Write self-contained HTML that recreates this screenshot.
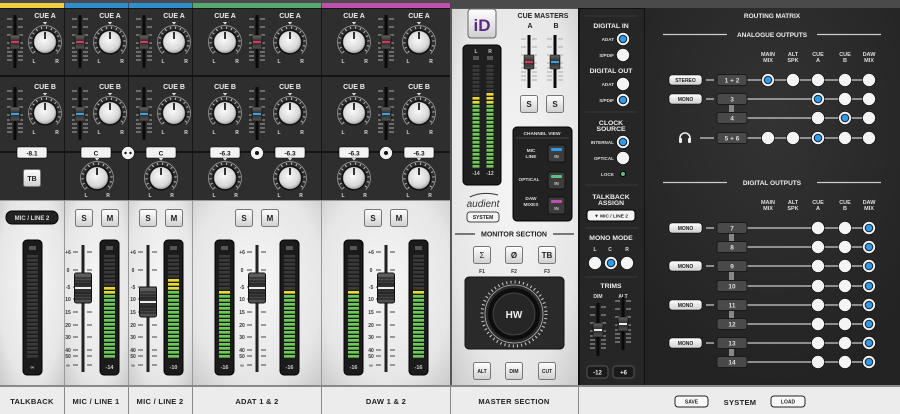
<!DOCTYPE html>
<html><head><meta charset="utf-8"><style>
html,body{margin:0;padding:0;background:#1e1e1e;width:900px;height:414px;overflow:hidden}
svg{display:block;font-family:"Liberation Sans",sans-serif;font-weight:bold}
</style></head><body>
<svg width="900" height="414" viewBox="0 0 900 414" xmlns="http://www.w3.org/2000/svg">
<defs>
<radialGradient id="kg" cx="45%" cy="40%" r="65%"><stop offset="0" stop-color="#fafafa"/><stop offset=".7" stop-color="#d8d8d8"/><stop offset="1" stop-color="#9a9a9a"/></radialGradient>
<linearGradient id="cg" x1="0" y1="0" x2="0" y2="1"><stop offset="0" stop-color="#666"/><stop offset=".5" stop-color="#2a2a2a"/><stop offset="1" stop-color="#555"/></linearGradient>
<radialGradient id="lg" cx="50%" cy="45%" r="75%"><stop offset="0" stop-color="#f6f6f6"/><stop offset=".7" stop-color="#e6e6e6"/><stop offset="1" stop-color="#c9c9c9"/></radialGradient>
<linearGradient id="bg" x1="0" y1="0" x2="0" y2="1"><stop offset="0" stop-color="#fff"/><stop offset="1" stop-color="#cfcfcf"/></linearGradient>
<radialGradient id="rg" cx="50%" cy="30%" r="70%"><stop offset="0" stop-color="#333"/><stop offset="1" stop-color="#232323"/></radialGradient>
<g id="knob">
<path d="M-10.3,10.3A14.5,14.5 0 1 1 10.3,10.3" fill="none" stroke="#bbb" stroke-width="2.4" stroke-dasharray="1 4"/>
<path d="M-11.7,11.7A16.5,16.5 0 1 1 11.7,11.7" fill="none" stroke="#999" stroke-width=".8"/>
<circle r="12.5" fill="#0c0c0c"/>
<circle r="11" fill="url(#kg)" stroke="#777" stroke-width=".5"/>
<line y1="-10" y2="-3" stroke="#111" stroke-width="1.7"/>
<path d="M-2.2,-20h4.4l-2.2,2.6z" fill="#ddd"/>
</g>
<g id="sf">
<rect x="-1.5" y="0" width="3" height="53" fill="#0a0a0a"/>
<path d="M-8,4h5M3,4h5M-8,12h5M3,12h5M-8,20h5M3,20h5M-8,28h5M3,28h5M-8,33h5M3,33h5M-8,37h5M3,37h5M-8,41h5M3,41h5M-8,45h5M3,45h5" stroke="#aaa" stroke-width="1"/>
<rect x="-5" y="20" width="10" height="14" rx="1" fill="url(#cg)" stroke="#000" stroke-width=".5"/>
</g>
<g id="sfA"><use href="#sf"/><rect x="-4" y="26" width="8" height="2" fill="#e0325a"/></g>
<g id="sfB"><use href="#sf"/><rect x="-4" y="26" width="8" height="2" fill="#3aa0e0"/></g>
<g id="sfW"><use href="#sf"/><rect x="-4" y="26" width="8" height="2" fill="#eee"/></g>
<g id="bc">
<rect x="-8.5" y="-15" width="17" height="30" rx="2" fill="url(#cg)" stroke="#111"/>
<path d="M-8,-10h16M-8,-7h16M-8,-4h16M-8,5h16M-8,8h16M-8,11h16" stroke="#111" stroke-width=".8"/>
<rect x="-8" y="-1" width="16" height="2" fill="#eee"/>
</g>
<g id="mt">
<rect width="19" height="135" rx="4" fill="#1b1b1b" stroke="#000"/>
<rect x="6" y="6" width="7" height="4" fill="#555"/>
<line x1="9.5" y1="15" x2="9.5" y2="119" stroke="#3a3a3a" stroke-width="11" stroke-dasharray="2.6 1.4"/>
</g>
<g id="scale" font-size="5" fill="#333" text-anchor="middle">
<text x="-15" y="9">+6</text><text x="-15" y="27">0</text><text x="-15" y="44">-5</text><text x="-15" y="56">10</text><text x="-15" y="69">15</text><text x="-15" y="82">20</text><text x="-15" y="94">30</text><text x="-15" y="107">40</text><text x="-15" y="113">50</text><text x="-15" y="122">∞</text>
<path d="M-10,7h5M4,7h5M-10,25h5M4,25h5M-10,42h5M4,42h5M-10,54h5M4,54h5M-10,67h5M4,67h5M-10,80h5M4,80h5M-10,92h5M4,92h5M-10,105h5M4,105h5M-10,111h5M4,111h5M-10,120h5M4,120h5" stroke="#444" stroke-width="1"/>
<rect x="-1.5" y="0" width="3" height="127" fill="#222"/>
</g>
<g id="r"><circle r="6.5" fill="#f4f4f4" stroke="#000" stroke-width=".6"/></g>
<g id="rs"><circle r="6.5" fill="#f4f4f4" stroke="#000" stroke-width=".6"/><circle r="4.3" fill="#1a2a3a"/><circle r="3.2" fill="#2f9be6"/></g>
<g id="btn"><rect x="-8.5" y="-8.5" width="17" height="17" rx="2" fill="url(#bg)" stroke="#777"/></g>
</defs>

<rect width="900" height="9" fill="#4a4a4a"/>
<rect x="0" y="3" width="64" height="5" fill="#f0d040"/>
<rect x="65" y="3" width="63" height="5" fill="#2d8fd0"/>
<rect x="129" y="3" width="63" height="5" fill="#2d8fd0"/>
<rect x="193" y="3" width="128" height="5" fill="#5aa870"/>
<rect x="322" y="3" width="128" height="5" fill="#c050b0"/>

<rect x="0" y="8" width="451" height="193" fill="#141414"/>
<g fill="#2e2e2e">
<rect x="0" y="9" width="64" height="66"/><rect x="65" y="9" width="63" height="66"/><rect x="129" y="9" width="63" height="66"/><rect x="193" y="9" width="128" height="66"/><rect x="322" y="9" width="128" height="66"/>
<rect x="0" y="77" width="64" height="74"/><rect x="65" y="77" width="63" height="74"/><rect x="129" y="77" width="63" height="74"/><rect x="193" y="77" width="128" height="74"/><rect x="322" y="77" width="128" height="74"/>
<rect x="0" y="153" width="64" height="47"/><rect x="65" y="153" width="63" height="47"/><rect x="129" y="153" width="63" height="47"/><rect x="193" y="153" width="128" height="47"/><rect x="322" y="153" width="128" height="47"/>
</g>

<use href="#sfA" x="15" y="15"/><use href="#sfA" x="80" y="15"/><use href="#sfA" x="144" y="15"/><use href="#sfA" x="257" y="15"/><use href="#sfA" x="386" y="15"/>
<use href="#sfB" x="15" y="87"/><use href="#sfB" x="80" y="87"/><use href="#sfB" x="144" y="87"/><use href="#sfB" x="257" y="87"/><use href="#sfB" x="386" y="87"/>
<g>
<use href="#knob" x="45" y="42"/><use href="#knob" x="110" y="42"/><use href="#knob" x="174" y="42"/><use href="#knob" x="225" y="42"/><use href="#knob" x="290" y="42"/><use href="#knob" x="354" y="42"/><use href="#knob" x="419" y="42"/>
<use href="#knob" x="45" y="113"/><use href="#knob" x="110" y="113"/><use href="#knob" x="174" y="113"/><use href="#knob" x="225" y="113"/><use href="#knob" x="290" y="113"/><use href="#knob" x="354" y="113"/><use href="#knob" x="419" y="113"/>
</g>
<g fill="#eee" font-size="7" text-anchor="middle">
<text x="45" y="18">CUE A</text><text x="110" y="18">CUE A</text><text x="174" y="18">CUE A</text><text x="225" y="18">CUE A</text><text x="290" y="18">CUE A</text><text x="354" y="18">CUE A</text><text x="419" y="18">CUE A</text>
<text x="45" y="89">CUE B</text><text x="110" y="89">CUE B</text><text x="174" y="89">CUE B</text><text x="225" y="89">CUE B</text><text x="290" y="89">CUE B</text><text x="354" y="89">CUE B</text><text x="419" y="89">CUE B</text>
</g>
<g fill="#ddd" font-size="5" text-anchor="middle">
<text x="34" y="63">L</text><text x="57" y="63">R</text><text x="99" y="63">L</text><text x="122" y="63">R</text><text x="163" y="63">L</text><text x="186" y="63">R</text><text x="214" y="63">L</text><text x="237" y="63">R</text><text x="279" y="63">L</text><text x="302" y="63">R</text><text x="343" y="63">L</text><text x="366" y="63">R</text><text x="408" y="63">L</text><text x="431" y="63">R</text>
<text x="34" y="134">L</text><text x="57" y="134">R</text><text x="99" y="134">L</text><text x="122" y="134">R</text><text x="163" y="134">L</text><text x="186" y="134">R</text><text x="214" y="134">L</text><text x="237" y="134">R</text><text x="279" y="134">L</text><text x="302" y="134">R</text><text x="343" y="134">L</text><text x="366" y="134">R</text><text x="408" y="134">L</text><text x="431" y="134">R</text>
<text x="86" y="197">L</text><text x="108" y="197">R</text><text x="150" y="197">L</text><text x="172" y="197">R</text><text x="214" y="197">L</text><text x="236" y="197">R</text><text x="279" y="197">L</text><text x="301" y="197">R</text><text x="343" y="197">L</text><text x="365" y="197">R</text><text x="408" y="197">L</text><text x="430" y="197">R</text>
</g>
<g fill="#f2f2f2" stroke="#000" stroke-width=".6">
<rect x="17" y="147" width="30" height="11" rx="2"/><rect x="81" y="147" width="30" height="11" rx="2"/><rect x="146" y="147" width="30" height="11" rx="2"/>
<rect x="210" y="147" width="30" height="11" rx="2"/><rect x="275" y="147" width="30" height="11" rx="2"/><rect x="339" y="147" width="30" height="11" rx="2"/><rect x="404" y="147" width="30" height="11" rx="2"/>
<circle cx="128" cy="153" r="6.5"/><circle cx="257" cy="153" r="6.5"/><circle cx="386" cy="153" r="6.5"/>
</g>
<g fill="#111"><circle cx="125.5" cy="153" r="1.2"/><circle cx="130.5" cy="153" r="1.2"/><circle cx="257" cy="153" r="2"/><circle cx="386" cy="153" r="2"/></g>
<g fill="#111" font-size="6.5" text-anchor="middle">
<text x="32" y="155.5">-8.1</text><text x="96" y="155.5">C</text><text x="161" y="155.5">C</text><text x="225" y="155.5">-6.3</text><text x="290" y="155.5">-6.3</text><text x="354" y="155.5">-6.3</text><text x="419" y="155.5">-6.3</text>
</g>
<use href="#knob" x="97" y="178"/><use href="#knob" x="161" y="178"/><use href="#knob" x="225" y="178"/><use href="#knob" x="290" y="178"/><use href="#knob" x="354" y="178"/><use href="#knob" x="419" y="178"/>
<use href="#btn" x="32" y="178"/><text x="32" y="181" font-size="7" text-anchor="middle" fill="#222">TB</text>

<rect x="0" y="200" width="451" height="186" fill="#999"/>
<g fill="url(#lg)">
<rect x="0" y="201" width="64" height="185"/><rect x="65" y="201" width="63" height="185"/><rect x="129" y="201" width="63" height="185"/><rect x="193" y="201" width="128" height="185"/><rect x="322" y="201" width="128" height="185"/>
</g>
<rect x="6" y="211" width="52" height="13" rx="6" fill="#222" stroke="#000"/>
<text x="32" y="220" font-size="6" fill="#ddd" text-anchor="middle">MIC / LINE 2</text>
<use href="#btn" x="84" y="218"/><use href="#btn" x="110" y="218"/><use href="#btn" x="148" y="218"/><use href="#btn" x="174" y="218"/><use href="#btn" x="244" y="218"/><use href="#btn" x="270" y="218"/><use href="#btn" x="373" y="218"/><use href="#btn" x="399" y="218"/>
<g font-size="8" fill="#222" text-anchor="middle">
<text x="84" y="221">S</text><text x="110" y="221">M</text><text x="148" y="221">S</text><text x="174" y="221">M</text><text x="244" y="221">S</text><text x="270" y="221">M</text><text x="373" y="221">S</text><text x="399" y="221">M</text>
</g>
<use href="#mt" x="23" y="240"/><use href="#mt" x="100" y="240"/><use href="#mt" x="164" y="240"/><use href="#mt" x="215" y="240"/><use href="#mt" x="280" y="240"/><use href="#mt" x="344" y="240"/><use href="#mt" x="409" y="240"/>
<g stroke-width="11" stroke-dasharray="2.6 1.4">
<line x1="109.5" y1="287" x2="109.5" y2="295" stroke="#e8d83a"/><line x1="109.5" y1="295" x2="109.5" y2="359" stroke="#6dc857"/>
<line x1="173.5" y1="279" x2="173.5" y2="291" stroke="#e8d83a"/><line x1="173.5" y1="291" x2="173.5" y2="359" stroke="#6dc857"/>
<line x1="224.5" y1="291" x2="224.5" y2="295" stroke="#e8d83a"/><line x1="224.5" y1="295" x2="224.5" y2="359" stroke="#6dc857"/>
<line x1="289.5" y1="291" x2="289.5" y2="295" stroke="#e8d83a"/><line x1="289.5" y1="295" x2="289.5" y2="359" stroke="#6dc857"/>
<line x1="353.5" y1="291" x2="353.5" y2="295" stroke="#e8d83a"/><line x1="353.5" y1="295" x2="353.5" y2="359" stroke="#6dc857"/>
<line x1="418.5" y1="291" x2="418.5" y2="295" stroke="#e8d83a"/><line x1="418.5" y1="295" x2="418.5" y2="359" stroke="#6dc857"/>
</g>
<g font-size="5.5" fill="#ccc" text-anchor="middle">
<text x="32.5" y="369">∞</text><text x="109.5" y="369">-14</text><text x="173.5" y="369">-10</text><text x="224.5" y="369">-16</text><text x="289.5" y="369">-16</text><text x="353.5" y="369">-16</text><text x="418.5" y="369">-16</text>
</g>
<use href="#scale" x="83" y="245"/><use href="#scale" x="148" y="245"/><use href="#scale" x="257" y="245"/><use href="#scale" x="386" y="245"/>
<use href="#bc" x="83" y="288"/><use href="#bc" x="148" y="302"/><use href="#bc" x="257" y="288"/><use href="#bc" x="386" y="288"/>

<rect x="450" y="8" width="129" height="378" fill="#555"/>
<rect x="452" y="9" width="126" height="377" fill="url(#lg)"/>
<rect x="468" y="9" width="28" height="29" rx="3" fill="url(#bg)" stroke="#666"/>
<text x="482" y="31" font-size="17" fill="#5b2d82" text-anchor="middle">iD</text>
<rect x="463" y="45" width="38" height="140" rx="4" fill="#1f1f1f" stroke="#000"/>
<g font-size="5" fill="#ccc" text-anchor="middle"><text x="476" y="53">L</text><text x="490" y="53">R</text><text x="476" y="175">-14</text><text x="490" y="175">-12</text></g>
<rect x="473" y="56" width="6" height="4" fill="#555"/><rect x="487" y="56" width="6" height="4" fill="#555"/>
<g stroke-width="7" stroke-dasharray="2.6 1.4">
<line x1="476" y1="65" x2="476" y2="169" stroke="#3a3a3a"/><line x1="490" y1="65" x2="490" y2="169" stroke="#3a3a3a"/>
<line x1="476" y1="97" x2="476" y2="105" stroke="#e8d83a"/><line x1="476" y1="105" x2="476" y2="169" stroke="#6dc857"/>
<line x1="490" y1="93" x2="490" y2="105" stroke="#e8d83a"/><line x1="490" y1="105" x2="490" y2="169" stroke="#6dc857"/>
</g>
<g font-size="7" fill="#222" text-anchor="middle">
<text x="543" y="18">CUE MASTERS</text><text x="530" y="28">A</text><text x="556" y="28">B</text>
</g>
<use href="#sfA" x="529" y="35"/><use href="#sfB" x="555" y="35"/>
<use href="#btn" x="529" y="104"/><use href="#btn" x="555" y="104"/>
<text x="529" y="107" font-size="8" text-anchor="middle" fill="#222">S</text><text x="555" y="107" font-size="8" text-anchor="middle" fill="#222">S</text>
<rect x="513" y="127" width="59" height="94" rx="4" fill="#222" stroke="#000"/>
<line x1="516" y1="138" x2="569" y2="138" stroke="#444"/>
<g font-size="4.8" fill="#ddd" text-anchor="middle">
<text x="542" y="135">CHANNEL VIEW</text><text x="531" y="152">MIC</text><text x="531" y="158">LINE</text><text x="529" y="181">OPTICAL</text><text x="531" y="200">DAW</text><text x="531" y="206">MIXES</text>
</g>
<g fill="#3c3c3c" stroke="#111"><rect x="548" y="145" width="17" height="17" rx="2"/><rect x="548" y="172" width="17" height="17" rx="2"/><rect x="548" y="197" width="17" height="17" rx="2"/></g>
<rect x="551" y="148" width="11" height="3" rx="1" fill="#2f9be6"/><rect x="551" y="175" width="11" height="3" rx="1" fill="#5ac08a"/><rect x="551" y="200" width="11" height="3" rx="1" fill="#c050b0"/>
<g font-size="4.5" fill="#ccc" text-anchor="middle"><text x="556.5" y="158">IN</text><text x="556.5" y="185">IN</text><text x="556.5" y="210">IN</text></g>
<path d="M470,197 q12,-6 28,-2" fill="none" stroke="#333" stroke-width="1"/>
<text x="483" y="207" font-size="10" font-weight="normal" font-style="italic" fill="#333" text-anchor="middle">audient</text>
<rect x="467" y="212" width="32" height="10" rx="3" fill="#f4f4f4" stroke="#444"/>
<text x="483" y="219" font-size="5" fill="#222" text-anchor="middle">SYSTEM</text>
<path d="M455,234h20M553,234h21" stroke="#333" stroke-width="1.2"/>
<text x="514" y="236.5" font-size="7" fill="#222" text-anchor="middle">MONITOR SECTION</text>
<use href="#btn" x="482" y="255"/><use href="#btn" x="514" y="255"/><use href="#btn" x="547" y="255"/>
<g font-size="8" fill="#222" text-anchor="middle"><text x="482" y="258" font-weight="normal">Σ</text><text x="514" y="258">Ø</text><text x="547" y="258">TB</text></g>
<g font-size="5" fill="#333" text-anchor="middle"><text x="482" y="273">F1</text><text x="514" y="273">F2</text><text x="547" y="273">F3</text></g>
<rect x="465" y="277" width="99" height="72" rx="4" fill="#2a2a2a" stroke="#111"/>
<circle cx="514" cy="314" r="32" fill="none" stroke="#ccc" stroke-width="3" stroke-dasharray="1 3.2"/>
<circle cx="514" cy="314" r="29" fill="none" stroke="#bbb" stroke-width=".8"/>
<circle cx="514" cy="314" r="26" fill="#0d0d0d"/>
<circle cx="514" cy="314" r="21" fill="#262626" stroke="#444"/>
<text x="514" y="318" font-size="10" fill="#eee" text-anchor="middle">HW</text>
<use href="#btn" x="482" y="371"/><use href="#btn" x="514" y="371"/><use href="#btn" x="547" y="371"/>
<g font-size="5" fill="#222" text-anchor="middle"><text x="482" y="373">ALT</text><text x="514" y="373">DIM</text><text x="547" y="373">CUT</text></g>

<rect x="578" y="8" width="68" height="378" fill="#111"/>
<rect x="580" y="9" width="64" height="377" fill="#262626"/>
<path d="M585,16h53M585,112h53M585,185h53M585,228h53M585,277h53" stroke="#3a3a3a" stroke-width="1"/>
<g font-size="6.8" fill="#eee" text-anchor="middle">
<text x="611" y="28">DIGITAL IN</text><text x="611" y="73">DIGITAL OUT</text><text x="611" y="125">CLOCK</text><text x="611" y="131">SOURCE</text>
<text x="611" y="199">TALKBACK</text><text x="611" y="205">ASSIGN</text><text x="611" y="240">MONO MODE</text><text x="611" y="288">TRIMS</text>
</g>
<g font-size="4.6" fill="#ddd" text-anchor="end">
<text x="614" y="41">ADAT</text><text x="614" y="57">S/PDIF</text><text x="614" y="86">ADAT</text><text x="614" y="102">S/PDIF</text><text x="614" y="144">INTERNAL</text><text x="614" y="160">OPTICAL</text><text x="614" y="176">LOCK</text>
</g>
<use href="#rs" x="623" y="39"/><use href="#r" x="623" y="55"/><use href="#r" x="623" y="84"/><use href="#rs" x="623" y="100"/><use href="#rs" x="623" y="142"/><use href="#r" x="623" y="158"/>
<circle cx="623" cy="174" r="2.5" fill="#5ac08a" stroke="#000"/>
<rect x="587" y="210" width="48" height="11" rx="3" fill="#f4f4f4" stroke="#000"/>
<text x="611" y="217.5" font-size="4.8" fill="#222" text-anchor="middle">▼ MIC / LINE 2</text>
<g font-size="5" fill="#ddd" text-anchor="middle"><text x="595" y="251">L</text><text x="610" y="251">C</text><text x="627" y="251">R</text><text x="598" y="298">DIM</text><text x="623" y="298">ALT</text></g>
<use href="#r" x="595" y="263"/><use href="#rs" x="611" y="263"/><use href="#r" x="627" y="263"/>
<use href="#sfW" x="598" y="303"/><use href="#sfW" x="623" y="297"/>
<rect x="587" y="366" width="21" height="12" rx="3" fill="#1a1a1a" stroke="#555"/><rect x="613" y="366" width="21" height="12" rx="3" fill="#1a1a1a" stroke="#555"/>
<g font-size="6" fill="#eee" text-anchor="middle"><text x="597.5" y="374.5">-12</text><text x="623.5" y="374.5">+6</text></g>

<rect x="645" y="8" width="255" height="378" fill="url(#rg)"/>
<g font-size="6.5" fill="#eee" text-anchor="middle">
<text x="772" y="18">ROUTING MATRIX</text><text x="772" y="37">ANALOGUE OUTPUTS</text><text x="772" y="185">DIGITAL OUTPUTS</text>
</g>
<path d="M663,34.5h64M817,34.5h64M663,182.5h64M817,182.5h64" stroke="#ccc" stroke-width="1.3"/>
<g font-size="5.5" fill="#ddd" text-anchor="middle">
<text x="768" y="56">MAIN</text><text x="768" y="62">MIX</text><text x="793" y="56">ALT</text><text x="793" y="62">SPK</text><text x="818" y="56">CUE</text><text x="818" y="62">A</text><text x="845" y="56">CUE</text><text x="845" y="62">B</text><text x="869" y="56">DAW</text><text x="869" y="62">MIX</text>
<text x="768" y="204">MAIN</text><text x="768" y="210">MIX</text><text x="793" y="204">ALT</text><text x="793" y="210">SPK</text><text x="818" y="204">CUE</text><text x="818" y="210">A</text><text x="845" y="204">CUE</text><text x="845" y="210">B</text><text x="869" y="204">DAW</text><text x="869" y="210">MIX</text>
</g>
<g stroke="#ccc" stroke-width="1.3">
<path d="M706,80h8M746,80h123M706,99h8M746,99h123M746,118h123M700,138h14M746,138h123"/>
<path d="M706,228h8M746,228h123M746,247h123M706,266h8M746,266h123M746,286h123M706,305h8M746,305h123M746,324h123M706,343h8M746,343h123M746,362h123"/>
</g>
<g fill="#888"><rect x="729" y="104" width="5" height="9"/><rect x="729" y="233" width="5" height="9"/><rect x="729" y="271" width="5" height="10"/><rect x="729" y="310" width="5" height="9"/><rect x="729" y="348" width="5" height="9"/></g>
<g fill="#4a4a4a" stroke="#1a1a1a">
<rect x="717" y="74.5" width="30" height="11" rx="2"/><rect x="717" y="93.5" width="30" height="11" rx="2"/><rect x="717" y="112.5" width="30" height="11" rx="2"/><rect x="717" y="132.5" width="30" height="11" rx="2"/>
<rect x="717" y="222.5" width="30" height="11" rx="2"/><rect x="717" y="241.5" width="30" height="11" rx="2"/><rect x="717" y="260.5" width="30" height="11" rx="2"/><rect x="717" y="280.5" width="30" height="11" rx="2"/>
<rect x="717" y="299.5" width="30" height="11" rx="2"/><rect x="717" y="318.5" width="30" height="11" rx="2"/><rect x="717" y="337.5" width="30" height="11" rx="2"/><rect x="717" y="356.5" width="30" height="11" rx="2"/>
</g>
<g font-size="6.5" fill="#ddd" text-anchor="middle">
<text x="732" y="82.5">1 + 2</text><text x="732" y="101.5">3</text><text x="732" y="120.5">4</text><text x="732" y="140.5">5 + 6</text>
<text x="732" y="230.5">7</text><text x="732" y="249.5">8</text><text x="732" y="268.5">9</text><text x="732" y="288.5">10</text><text x="732" y="307.5">11</text><text x="732" y="326.5">12</text><text x="732" y="345.5">13</text><text x="732" y="364.5">14</text>
</g>
<g fill="url(#bg)" stroke="#000" stroke-width=".6">
<rect x="669" y="75" width="33" height="10" rx="3"/><rect x="669" y="94" width="33" height="10" rx="3"/>
<rect x="669" y="223" width="33" height="10" rx="3"/><rect x="669" y="261" width="33" height="10" rx="3"/><rect x="669" y="300" width="33" height="10" rx="3"/><rect x="669" y="338" width="33" height="10" rx="3"/>
</g>
<g font-size="5" fill="#222" text-anchor="middle">
<text x="685.5" y="82">STEREO</text><text x="685.5" y="101">MONO</text><text x="685.5" y="230">MONO</text><text x="685.5" y="268">MONO</text><text x="685.5" y="307">MONO</text><text x="685.5" y="345">MONO</text>
</g>
<path d="M680,141v-3a5,5 0 0 1 10,0v3" fill="none" stroke="#eee" stroke-width="1.6"/>
<rect x="679" y="138" width="3" height="5" rx="1" fill="#eee"/><rect x="688" y="138" width="3" height="5" rx="1" fill="#eee"/>
<use href="#rs" x="768" y="80"/><use href="#r" x="793" y="80"/><use href="#r" x="818" y="80"/><use href="#r" x="845" y="80"/><use href="#r" x="869" y="80"/>
<use href="#rs" x="818" y="99"/><use href="#r" x="845" y="99"/><use href="#r" x="869" y="99"/>
<use href="#r" x="818" y="118"/><use href="#rs" x="845" y="118"/><use href="#r" x="869" y="118"/>
<use href="#r" x="768" y="138"/><use href="#r" x="793" y="138"/><use href="#rs" x="818" y="138"/><use href="#r" x="845" y="138"/><use href="#r" x="869" y="138"/>
<use href="#r" x="818" y="228"/><use href="#r" x="845" y="228"/><use href="#rs" x="869" y="228"/>
<use href="#r" x="818" y="247"/><use href="#r" x="845" y="247"/><use href="#rs" x="869" y="247"/>
<use href="#r" x="818" y="266"/><use href="#r" x="845" y="266"/><use href="#rs" x="869" y="266"/>
<use href="#r" x="818" y="286"/><use href="#r" x="845" y="286"/><use href="#rs" x="869" y="286"/>
<use href="#r" x="818" y="305"/><use href="#r" x="845" y="305"/><use href="#rs" x="869" y="305"/>
<use href="#r" x="818" y="324"/><use href="#r" x="845" y="324"/><use href="#rs" x="869" y="324"/>
<use href="#r" x="818" y="343"/><use href="#r" x="845" y="343"/><use href="#rs" x="869" y="343"/>
<use href="#r" x="818" y="362"/><use href="#r" x="845" y="362"/><use href="#rs" x="869" y="362"/>

<rect x="0" y="385" width="900" height="29" fill="#8a8a8a"/>
<g fill="#ececec">
<rect x="0" y="387" width="64" height="27"/><rect x="65" y="387" width="63" height="27"/><rect x="129" y="387" width="63" height="27"/><rect x="193" y="387" width="128" height="27"/><rect x="322" y="387" width="128" height="27"/><rect x="451" y="387" width="127" height="27"/><rect x="579" y="387" width="321" height="27"/>
</g>
<g font-size="7.5" fill="#222" text-anchor="middle" letter-spacing=".3">
<text x="32" y="404">TALKBACK</text><text x="96" y="404">MIC / LINE 1</text><text x="160" y="404">MIC / LINE 2</text><text x="257" y="404">ADAT 1 &amp; 2</text><text x="386" y="404">DAW 1 &amp; 2</text><text x="514" y="404">MASTER SECTION</text><text x="740" y="405">SYSTEM</text>
</g>
<rect x="675" y="396" width="33" height="11" rx="3" fill="#f8f8f8" stroke="#222"/><rect x="771" y="396" width="34" height="11" rx="3" fill="#f8f8f8" stroke="#222"/>
<g font-size="5" fill="#222" text-anchor="middle"><text x="691.5" y="403.5">SAVE</text><text x="788" y="403.5">LOAD</text></g>
</svg>
</body></html>
